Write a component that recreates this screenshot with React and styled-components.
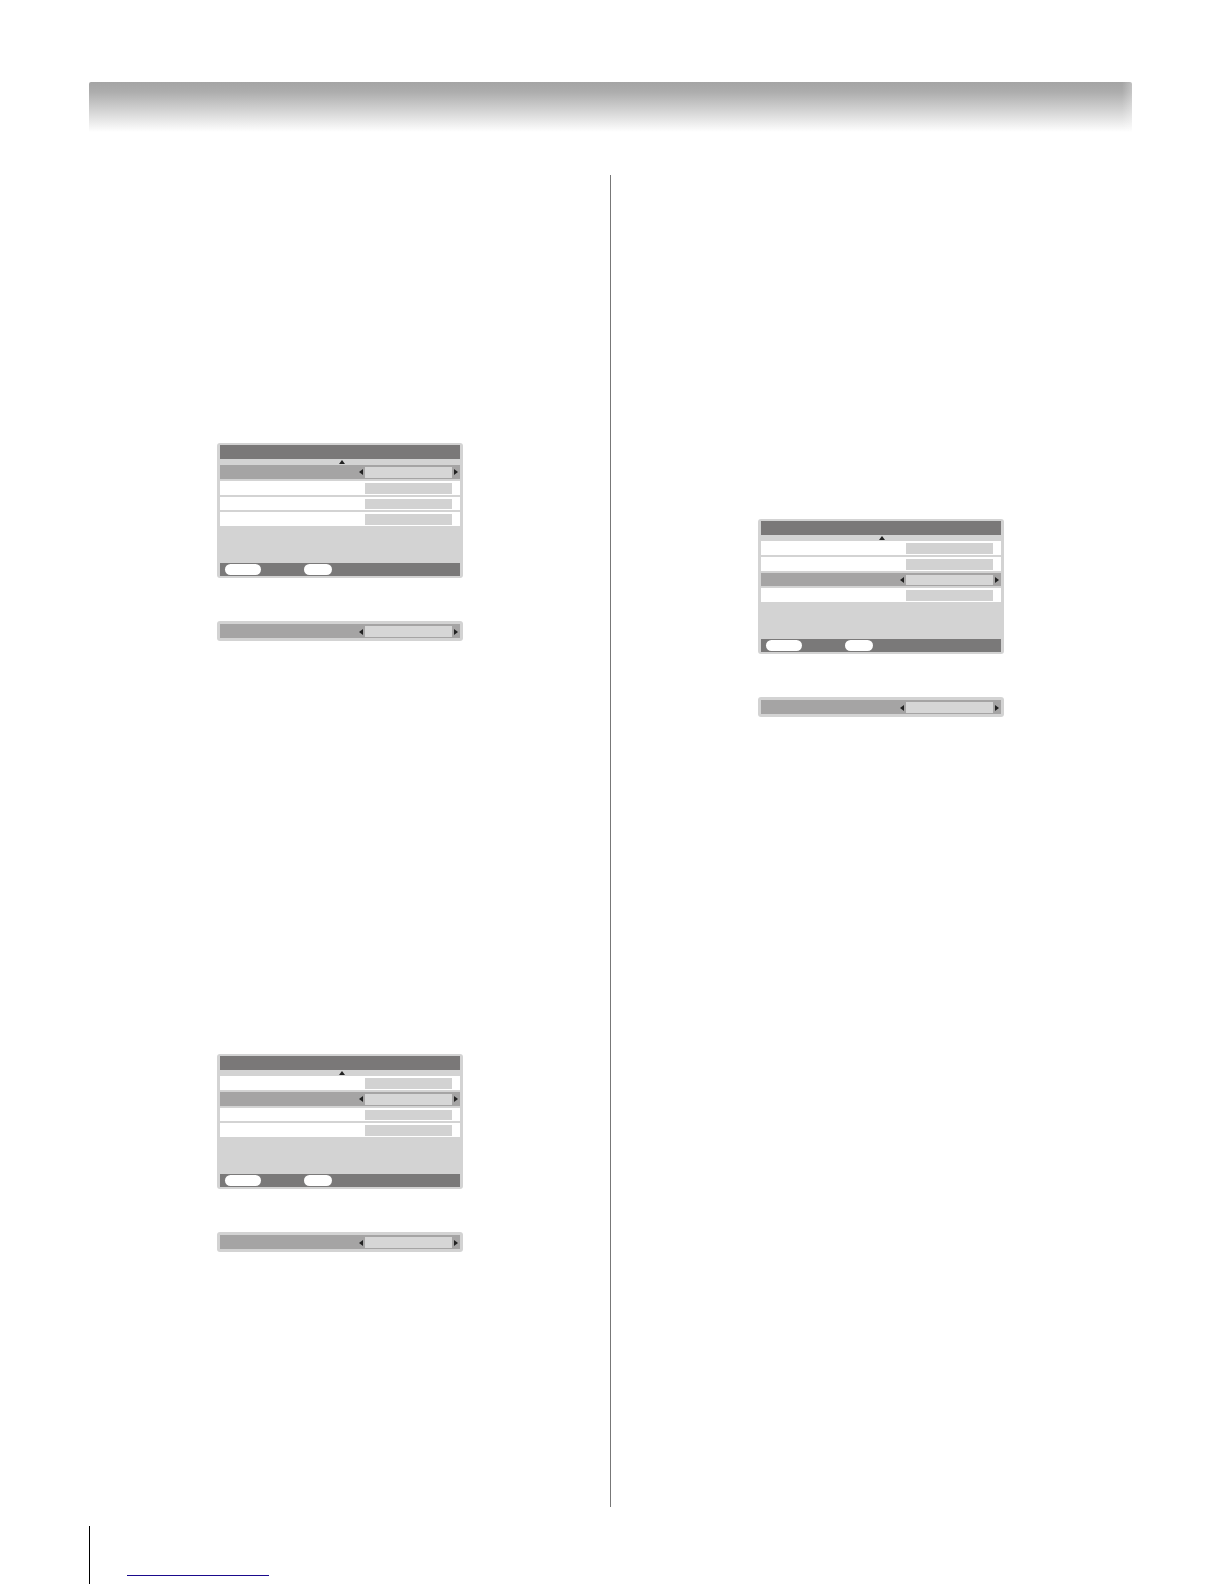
import React from "react";
import styled, { createGlobalStyle } from "styled-components";

const leftMenus = [
  { id: "first", rows: 4, selected: 0 },
  { id: "second", rows: 4, selected: 1 },
];

const rightMenus = [{ id: "third", rows: 4, selected: 2 }];

function Arrow({ direction }) {
  const points = {
    up: "0,4 3,0 6,4",
    left: "4,0 4,6 0,3",
    right: "0,0 4,3 0,6",
  };
  const isUp = direction === "up";
  return (
    <svg width={isUp ? 6 : 4} height={isUp ? 4 : 6} aria-hidden="true">
      <polygon points={points[direction]} fill="#222222" />
    </svg>
  );
}

function Setting({ selected }) {
  return (
    <Row $selected={selected}>
      {selected && (
        <ArrowButton type="button" aria-label="Previous">
          <Arrow direction="left" />
        </ArrowButton>
      )}
      <Value $selected={selected} />
      <RowEnd>
        {selected && (
          <ArrowButton type="button" aria-label="Next">
            <Arrow direction="right" />
          </ArrowButton>
        )}
      </RowEnd>
    </Row>
  );
}

function Menu({ rows, selected }) {
  return (
    <MenuGroup>
      <Panel>
        <TitleBar />
        <ScrollStrip>
          <Arrow direction="up" />
        </ScrollStrip>
        <Rows>
          {Array.from({ length: rows }, (_, index) => (
            <Setting key={index} selected={index === selected} />
          ))}
        </Rows>
        <EmptyArea />
        <ButtonBar>
          <Pill type="button" aria-label="Enter" $width={36} />
          <Pill type="button" aria-label="Back" $width={28} />
        </ButtonBar>
      </Panel>
      <SinglePanel>
        <Setting selected />
      </SinglePanel>
    </MenuGroup>
  );
}

export default function App() {
  return (
    <>
      <GlobalStyle />
      <Page>
        <Header />
        <Columns>
          <LeftColumn>
            {leftMenus.map((menu) => (
              <Menu key={menu.id} {...menu} />
            ))}
          </LeftColumn>
          <RightColumn>
            {rightMenus.map((menu) => (
              <Menu key={menu.id} {...menu} />
            ))}
          </RightColumn>
        </Columns>
        <Footer>
          <FooterLink href="#top" aria-label="Top of page" />
        </Footer>
      </Page>
    </>
  );
}

const GlobalStyle = createGlobalStyle`
  * {
    box-sizing: border-box;
  }
  body {
    margin: 0;
    background-color: #ffffff;
    font-family: "Liberation Sans", sans-serif;
  }
`;

const Page = styled.div`
  min-height: 100vh;
  padding: 82px 92px 0 89px;
`;

const Header = styled.header`
  height: 50px;
  border-radius: 2px 2px 0 0;
  background: linear-gradient(
      to left,
      rgba(255, 255, 255, 0.3),
      rgba(255, 255, 255, 0) 10px
    ),
    linear-gradient(#a4a4a4, #adadad 20%, #d6d6d6 60%, #ffffff);
`;

const Columns = styled.main`
  display: grid;
  grid-template-columns: 1fr 1fr;
  margin-top: 43px;
`;

const Column = styled.section`
  display: flex;
  flex-direction: column;
  align-items: flex-start;
  gap: 413px;
`;

const LeftColumn = styled(Column)`
  padding: 268px 0 255px 128px;
  border-right: 1px solid #777777;
`;

const RightColumn = styled(Column)`
  padding: 344px 0 0 147px;
`;

const MenuGroup = styled.div`
  width: 246px;
  display: flex;
  flex-direction: column;
  gap: 43px;
`;

const Panel = styled.div`
  padding: 2px 3px;
  border-radius: 3px;
  background-color: #d3d3d3;
`;

const SinglePanel = styled(Panel)`
  display: grid;
  grid-template-rows: 14px;
  padding: 3px;
`;

const TitleBar = styled.div`
  height: 14px;
  background-color: #7a7878;
`;

const ScrollStrip = styled.div`
  height: 6px;
  display: flex;
  align-items: center;
  justify-content: center;
  padding-left: 3px;
`;

const Rows = styled.div`
  height: 61px;
  display: grid;
  grid-auto-rows: 1fr;
  gap: 2px;
`;

const Row = styled.div`
  display: flex;
  align-items: stretch;
  justify-content: flex-end;
  padding: 2px 0 1px;
  background-color: ${(props) => (props.$selected ? "#a5a4a4" : "#ffffff")};
`;

const Value = styled.div`
  width: 87px;
  margin-left: 2px;
  background-color: ${(props) => (props.$selected ? "#d6d6d6" : "#d2d2d2")};
`;

const RowEnd = styled.div`
  width: 8px;
  display: flex;
  padding-left: 2px;
`;

const ArrowButton = styled.button`
  display: flex;
  align-items: center;
  padding: 0;
  border: none;
  background: none;
  cursor: pointer;
`;

const EmptyArea = styled.div`
  height: 37px;
`;

const ButtonBar = styled.div`
  height: 13px;
  display: flex;
  align-items: center;
  gap: 43px;
  padding-left: 5px;
  background-color: #7a7979;
`;

const Pill = styled.button`
  width: ${(props) => props.$width}px;
  height: 11px;
  padding: 0;
  border: none;
  border-radius: 6px;
  background-color: #ffffff;
  cursor: pointer;
`;

const Footer = styled.footer`
  height: 58px;
  margin-top: 19px;
  padding-left: 37px;
  border-left: 1px solid #000000;
`;

const FooterLink = styled.a`
  display: block;
  width: 142px;
  height: 50px;
  border-bottom: 1px solid #1a0a8c;
`;
